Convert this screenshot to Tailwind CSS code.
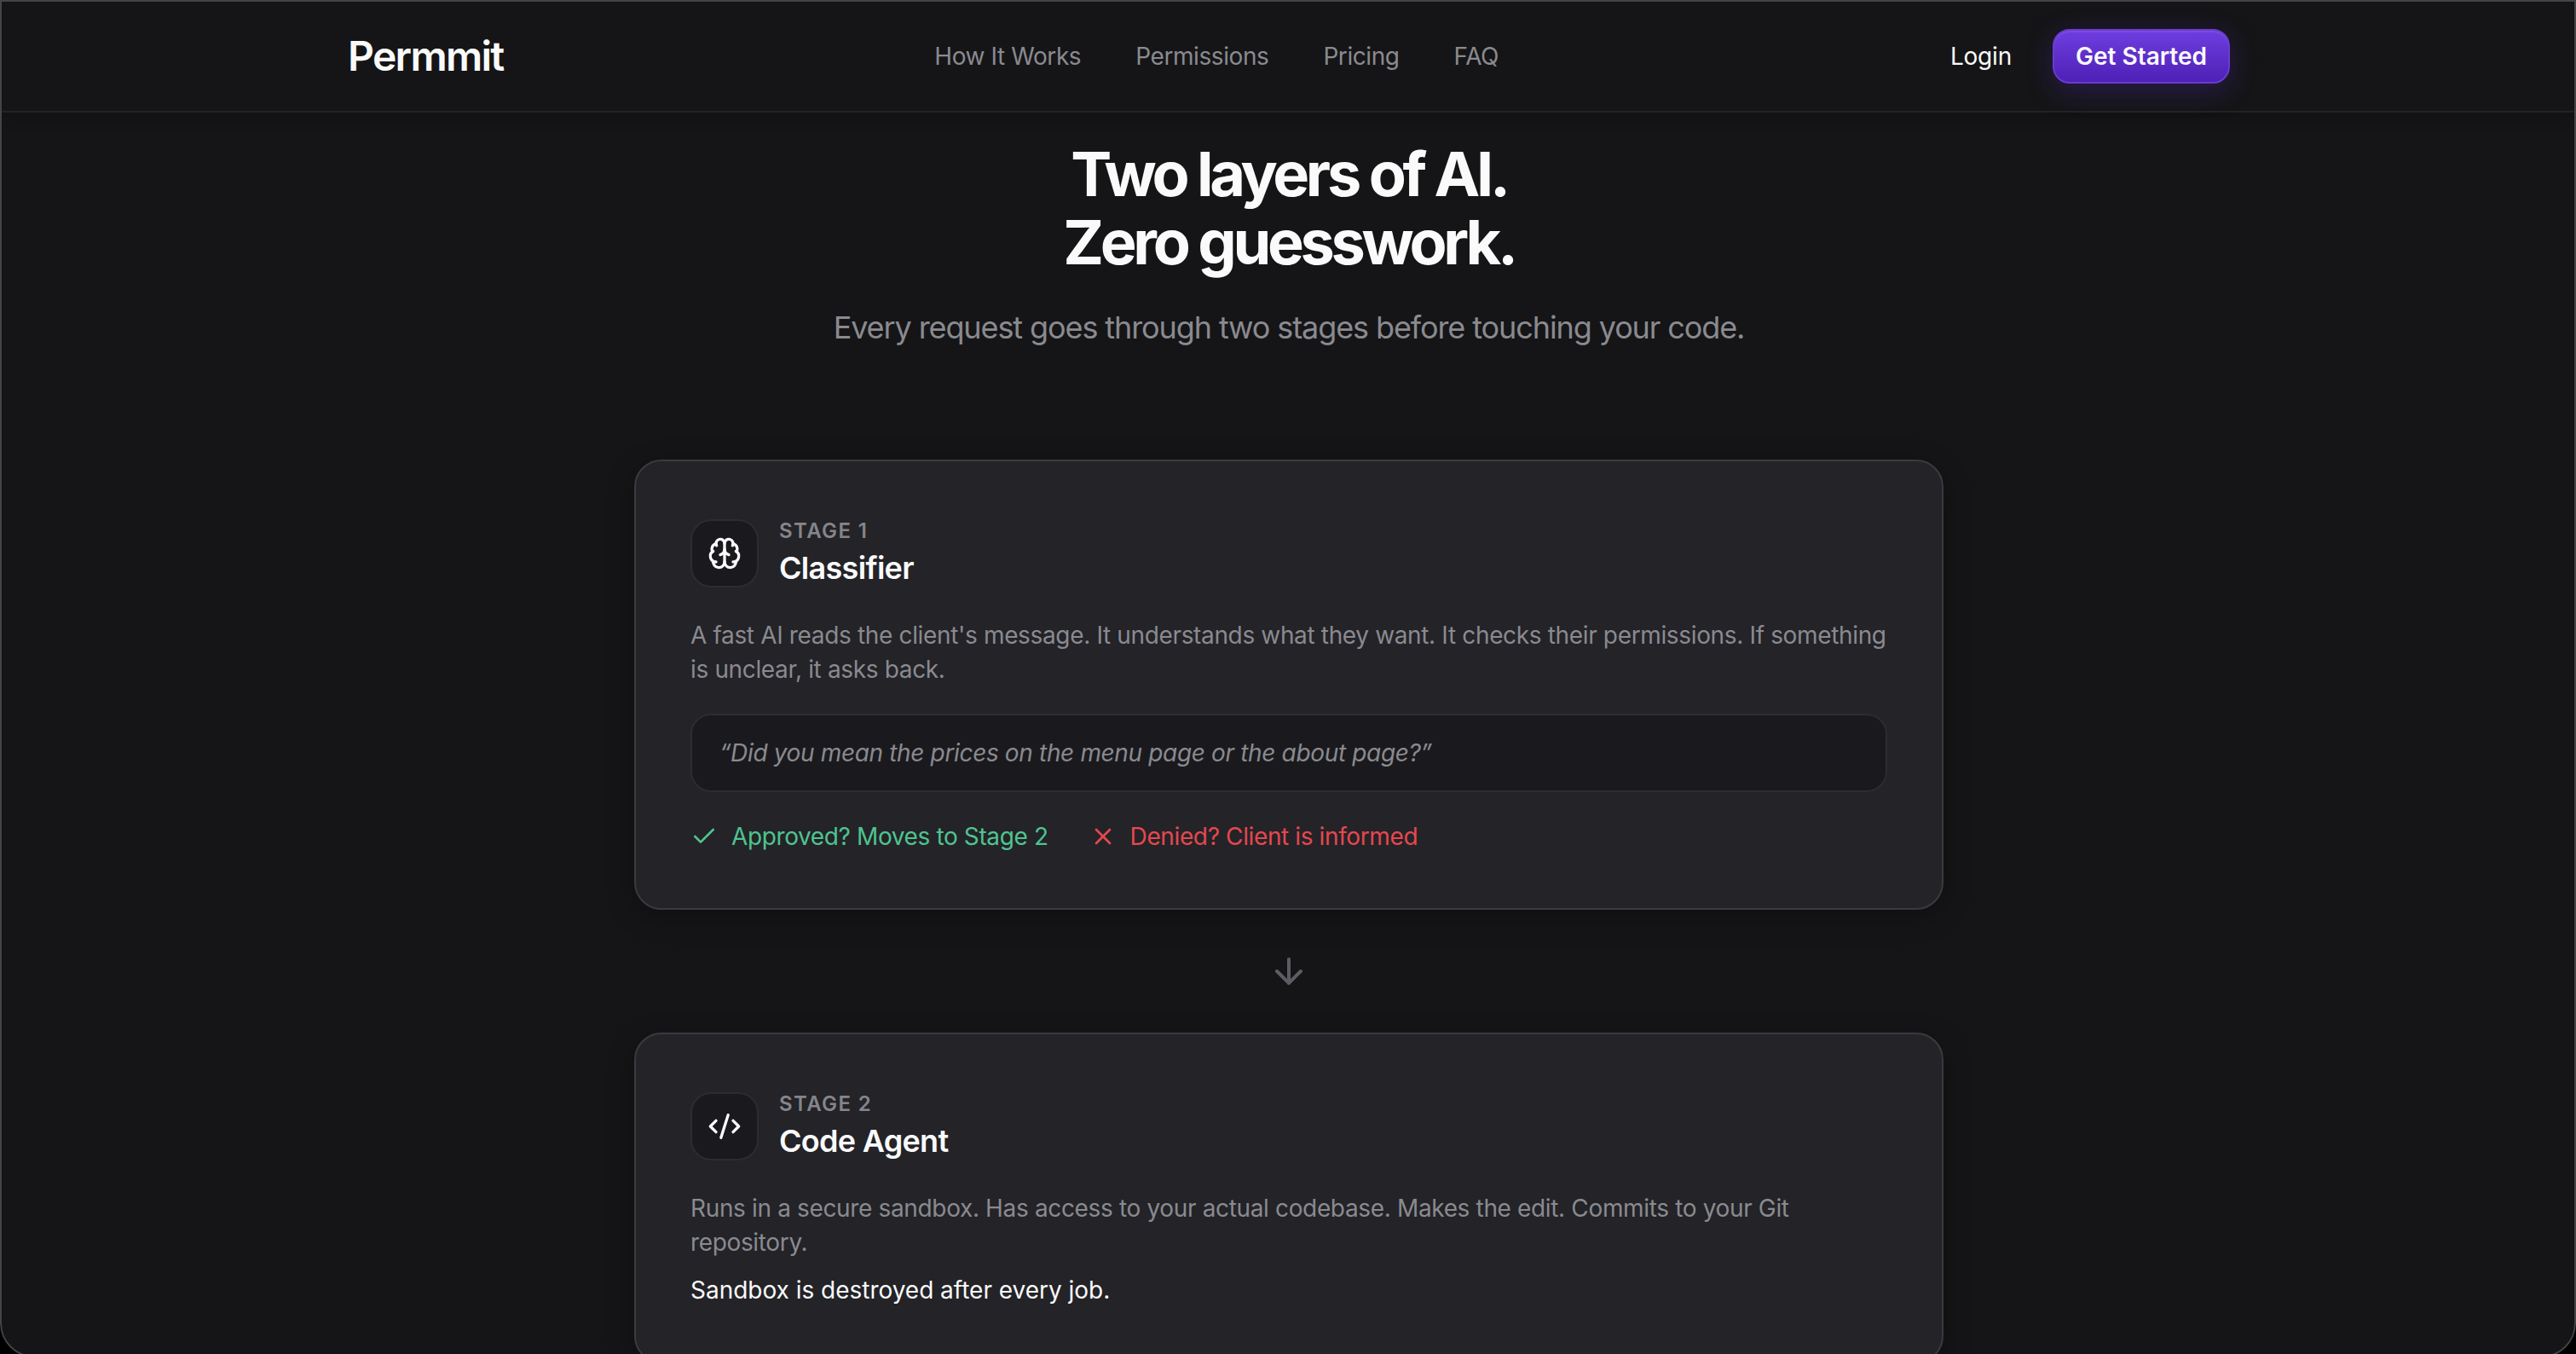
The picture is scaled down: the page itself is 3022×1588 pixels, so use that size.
<!DOCTYPE html>
<html lang="en">
<head>
  <meta charset="UTF-8">
  <title>Permmit</title>
  <script src="https://cdn.jsdelivr.net/npm/@tailwindcss/browser@4"></script>
</head>
<body class="h-[1588px] overflow-hidden bg-black font-['Inter',sans-serif] text-[#fafafa] antialiased">
  <div class="relative h-[1592px] overflow-hidden rounded-b-[40px] bg-[#151517] pl-[2px]">
    <!-- Nav -->
    <header class="-ml-[2px] h-[132px] border-b-2 border-[#232326] pl-[2px] pt-[2px] shadow-[0_4px_16px_rgba(0,0,0,0.25)]">
      <div class="mx-auto flex h-full max-w-[2304px] items-center justify-between px-12">
        <a href="#" class="text-[48px] font-semibold tracking-[-1.7px]">Permmit</a>
        <nav class="mr-[24px] flex items-center gap-16 text-[28px] tracking-[-0.42px] text-[#8a8a8f]">
          <a href="#">How It Works</a>
          <a href="#">Permissions</a>
          <a href="#">Pricing</a>
          <a href="#">FAQ</a>
        </nav>
        <div class="flex items-center gap-12">
          <a href="#" class="text-[28px] tracking-[-0.2px]">Login</a>
          <a href="#" class="flex h-16 w-[208px] items-center justify-center rounded-[20px] border-2 border-[#6a3bd0] bg-gradient-to-b from-[#6f3de0] to-[#4f20b6] text-[28px] font-semibold shadow-[inset_0_2px_0_rgba(255,255,255,0.08),0_8px_32px_rgba(91,45,200,0.3)]">Get Started</a>
        </div>
      </div>
    </header>

    <main class="mx-auto max-w-[1536px]">
      <!-- Heading -->
      <div class="mt-[32px] text-center">
        <h1 class="text-[72px] leading-[80px] font-bold tracking-[-4.3px]">Two layers of AI.<br>Zero guesswork.</h1>
        <p class="mt-8 text-[36px] leading-[56px] tracking-[-1.1px] text-[#8a8a8f]">Every request goes through two stages before touching your code.</p>
      </div>

      <!-- Stage 1 -->
      <section class="mt-[127px] rounded-[32px] border-2 border-[#3a3a3f] bg-[#232328] p-16 shadow-[0_8px_32px_rgba(0,0,0,0.3)]">
        <div class="mb-8 flex items-center gap-6">
          <div class="flex h-20 w-20 items-center justify-center rounded-[24px] border-2 border-[#2c2c31] bg-[#1a1a1e]">
            <svg class="h-10 w-10" viewBox="0 0 24 24" fill="none" stroke="#fafafa" stroke-width="2" stroke-linecap="round" stroke-linejoin="round"><path d="M12 18V5"/><path d="M15 13a4.17 4.17 0 0 1-3-4 4.17 4.17 0 0 1-3 4"/><path d="M17.598 6.5A3 3 0 1 0 12 5a3 3 0 1 0-5.598 1.5"/><path d="M17.997 5.125a4 4 0 0 1 2.526 5.77"/><path d="M18 18a4 4 0 0 0 2-7.464"/><path d="M19.967 17.483A4 4 0 1 1 12 18a4 4 0 1 1-7.967-.517"/><path d="M6 18a4 4 0 0 1-2-7.464"/><path d="M6.003 5.125a4 4 0 0 0-2.526 5.77"/></svg>
          </div>
          <div>
            <p class="pt-[2px] text-[24px] leading-8 font-semibold tracking-[1.4px] text-[#85858a]">STAGE 1</p>
            <h3 class="text-[36px] leading-[54px] font-semibold tracking-[-0.7px]">Classifier</h3>
          </div>
        </div>
        <p class="text-[28px] leading-10 tracking-[-0.35px] text-[#8a8a8f]">A fast AI reads the client's message. It understands what they want. It checks their permissions. If something is unclear, it asks back.</p>
        <div class="mt-8 rounded-[24px] border-2 border-[#2c2c31] bg-[#1a1a1e] px-8 py-6 text-[28px] leading-10 tracking-[-0.35px] text-[#8a8a8f] italic">“Did you mean the prices on the menu page or the about page?”</div>
        <div class="mt-8 flex items-center gap-12 text-[28px] leading-10 tracking-[-0.38px]">
          <div class="flex items-center gap-4 text-[#4fc48f]">
            <svg class="h-8 w-8" viewBox="0 0 24 24" fill="none" stroke="currentColor" stroke-width="2" stroke-linecap="round" stroke-linejoin="round"><path d="M20 6 9 17l-5-5"/></svg>
            <span>Approved? Moves to Stage 2</span>
          </div>
          <div class="flex items-center gap-4 text-[#e5484d]">
            <svg class="h-8 w-8" viewBox="0 0 24 24" fill="none" stroke="currentColor" stroke-width="2" stroke-linecap="round" stroke-linejoin="round"><path d="M18 6 6 18"/><path d="m6 6 12 12"/></svg>
            <span>Denied? Client is informed</span>
          </div>
        </div>
      </section>

      <!-- Arrow -->
      <div class="my-12 flex justify-center">
        <svg class="h-12 w-12" viewBox="0 0 24 24" fill="none" stroke="#5c5c62" stroke-width="2" stroke-linecap="round" stroke-linejoin="round"><path d="M12 5v14"/><path d="m19 12-7 7-7-7"/></svg>
      </div>

      <!-- Stage 2 -->
      <section class="rounded-[32px] border-2 border-[#3a3a3f] bg-[#232328] p-16 shadow-[0_8px_32px_rgba(0,0,0,0.3)]">
        <div class="mb-8 flex items-center gap-6">
          <div class="flex h-20 w-20 items-center justify-center rounded-[24px] border-2 border-[#2c2c31] bg-[#1a1a1e]">
            <svg class="h-10 w-10" viewBox="0 0 24 24" fill="none" stroke="#fafafa" stroke-width="2" stroke-linecap="round" stroke-linejoin="round"><path d="m18 16 4-4-4-4"/><path d="m6 8-4 4 4 4"/><path d="m14.5 4-5 16"/></svg>
          </div>
          <div>
            <p class="pt-[2px] text-[24px] leading-8 font-semibold tracking-[1.4px] text-[#85858a]">STAGE 2</p>
            <h3 class="text-[36px] leading-[54px] font-semibold tracking-[-0.7px]">Code Agent</h3>
          </div>
        </div>
        <p class="text-[28px] leading-10 tracking-[-0.35px] text-[#8a8a8f]">Runs in a secure sandbox. Has access to your actual codebase. Makes the edit. Commits to your Git repository.</p>
        <p class="mt-4 text-[28px] leading-10 tracking-[-0.02px]">Sandbox is destroyed after every job.</p>
      </section>
    </main>

    <!-- Window frame -->
    <div class="pointer-events-none absolute inset-0 rounded-b-[40px] border-2 border-[#444448]"></div>
  </div>
</body>
</html>
